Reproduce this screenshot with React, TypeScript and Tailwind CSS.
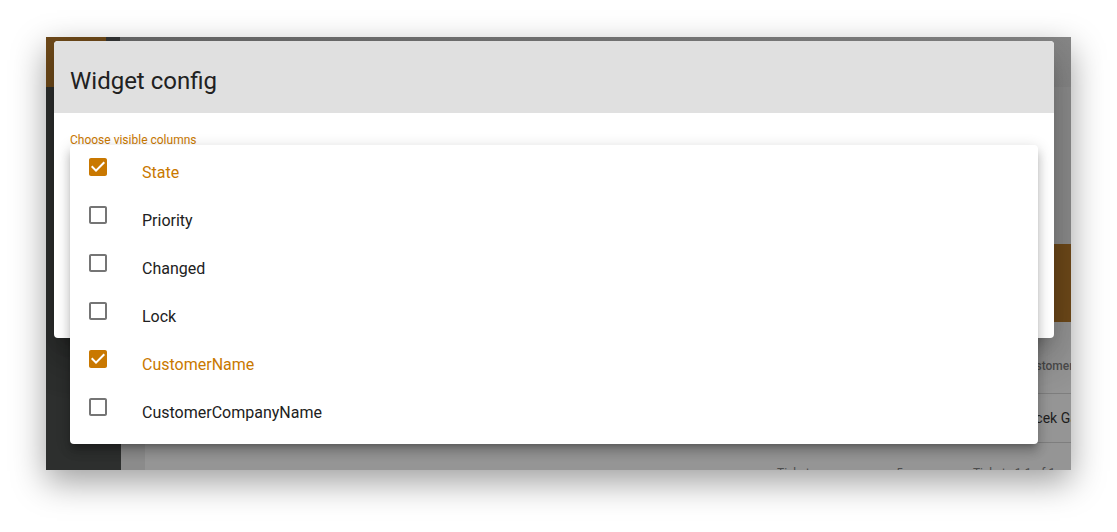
import React from "react";

type Column = {
    name: string;
    visible: boolean;
};

const columns: Column[] = [
    { name: "State", visible: true },
    { name: "Priority", visible: false },
    { name: "Changed", visible: false },
    { name: "Lock", visible: false },
    { name: "CustomerName", visible: true },
    { name: "CustomerCompanyName", visible: false },
];

// checkbox glyphs, same shapes as the material icons
const CheckIcon: React.FC<{ checked: boolean }> = ({ checked }) => (
    <svg viewBox="0 0 24 24" width="24" height="24" className={checked ? "fill-[#c97800]" : "fill-[#757575]"}>
        {checked ? (
            <path d="M19 3H5c-1.11 0-2 .9-2 2v14c0 1.1.89 2 2 2h14c1.11 0 2-.9 2-2V5c0-1.1-.89-2-2-2zm-9 14l-5-5 1.41-1.41L10 14.17l7.59-7.59L19 8l-9 9z" />
        ) : (
            <path d="M19 5v14H5V5h14m0-2H5c-1.1 0-2 .9-2 2v14c0 1.1.9 2 2 2h14c1.1 0 2-.9 2-2V5c0-1.1-.9-2-2-2z" />
        )}
    </svg>
);

const App: React.FC = () => {
    return (
        <div className="w-[1117px] h-[532px] bg-white pt-[37px] pl-[46px] font-['Roboto',sans-serif]">
            <div className="relative w-[1025px] h-[433px] overflow-hidden flex flex-col shadow-[0_12px_32px_rgba(0,0,0,0.38)]">
                {/* app behind the dialog, already dimmed */}
                <div className="h-[50px] flex shrink-0">
                    <div className="w-[60px] shrink-0 bg-[#6f4a1a]"></div>
                    <div className="w-[14px] shrink-0 bg-[#333434]"></div>
                    <div className="flex-1 bg-gradient-to-r from-[#6a6a6a] to-[#888888]"></div>
                </div>
                <div className="flex-1 flex min-h-0">
                    <div className="w-[75px] shrink-0 bg-[#2d2f2e]"></div>
                    <div className="w-[24px] shrink-0 bg-[#8b8b8b]"></div>
                    <div className="flex-1 min-w-0 overflow-hidden flex flex-col bg-[#8d8d8d] pt-[157px]">
                        <div className="h-[78px] bg-[#6f4a1a] shrink-0"></div>
                        <div className="bg-[#959595] flex-1 flex flex-col">
                            <div className="h-[72px] flex items-end pb-[19px] pl-[876px] border-b border-[#7e7e7e] shrink-0">
                                <span className="text-[12px] leading-4 text-[#4c4c4c] whitespace-nowrap font-medium">Customer name</span>
                            </div>
                            <div className="h-[49px] flex items-center pl-[875px] border-b border-[#7e7e7e] shrink-0">
                                <span className="text-[14px] text-[#1e1e1e] whitespace-nowrap">Jacek Gabrys</span>
                            </div>
                            <div className="h-[60px] flex items-center pl-[632px] text-[12px] text-[#4c4c4c] whitespace-nowrap shrink-0">
                                <span>Tickets per page:</span>
                                <span className="ml-[28px]">5</span>
                                <span className="ml-[70px]">Tickets 1-1 of 1</span>
                            </div>
                        </div>
                    </div>
                </div>

                {/* dialog */}
                <div className="absolute left-[8px] top-[4px] w-[1000px] h-[297px] rounded-[4px] bg-white overflow-hidden shadow-[0_11px_15px_-7px_rgba(0,0,0,0.2),0_24px_38px_3px_rgba(0,0,0,0.14),0_9px_46px_8px_rgba(0,0,0,0.12)]">
                    <div className="h-[72px] bg-[#e0e0e0] px-4 pt-[7px] flex items-center">
                        <h2 className="text-[24px] text-[#212121] font-normal">Widget config</h2>
                    </div>
                    <div className="px-4 pt-5">
                        <label className="block text-[12px] leading-[14px] text-[#c97800]">Choose visible columns</label>
                    </div>
                </div>

                {/* open column menu */}
                <ul className="absolute left-[24px] top-[108px] w-[968px] rounded-[4px] bg-white pt-[4px] pb-[7px] shadow-[0_5px_5px_-3px_rgba(0,0,0,0.2),0_8px_10px_1px_rgba(0,0,0,0.14),0_3px_14px_2px_rgba(0,0,0,0.12)]">
                    {columns.map((column) => (
                        <li key={column.name} className="h-12 flex items-center pl-4">
                            <div className="w-[56px] self-start pt-[6px]">
                                <CheckIcon checked={column.visible} />
                            </div>
                            <span className={"text-[16px] " + (column.visible ? "text-[#c97800]" : "text-[#212121]")}>
                                {column.name}
                            </span>
                        </li>
                    ))}
                </ul>
            </div>
        </div>
    );
};

export default App;
